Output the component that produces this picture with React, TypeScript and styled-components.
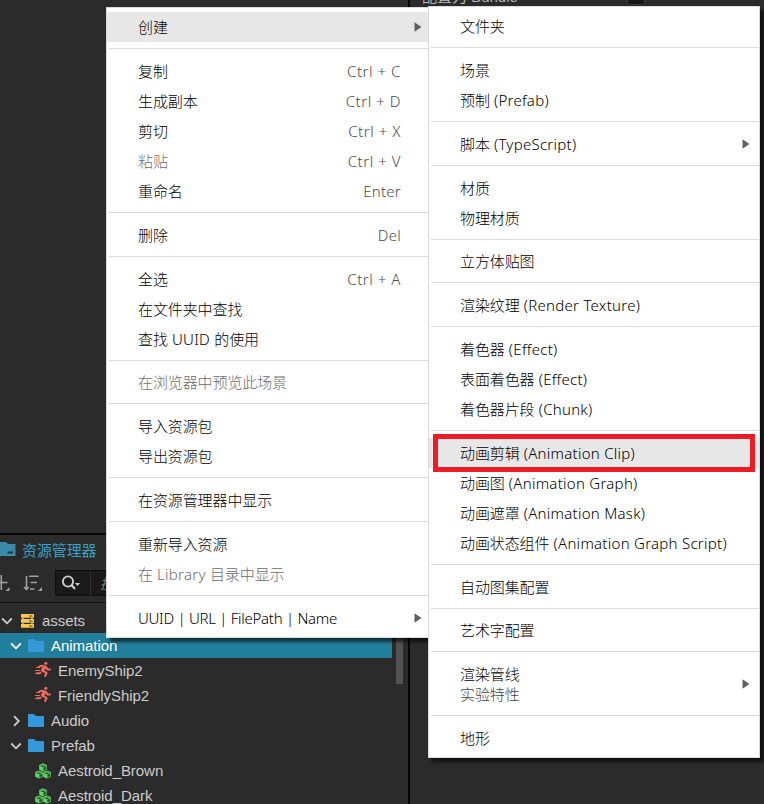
import React from 'react';
import styled, { createGlobalStyle } from 'styled-components';
import { FaRunning } from 'react-icons/fa';

const GlobalStyle = createGlobalStyle`
  * { box-sizing: border-box; }
  body { margin: 0; background: #2b2b2b; overflow: hidden; }
`;

const uiFont = `"Liberation Sans", "Noto Sans CJK SC", sans-serif`;
const menuFont = `"Noto Sans CJK SC", "Noto Sans", sans-serif`;

const Editor = styled.div`
  position: relative;
  display: flex;
  width: 764px;
  height: 804px;
  overflow: hidden;
  background: #2b2b2b;
  font-family: ${uiFont};
`;

const LeftDock = styled.div`
  display: flex;
  flex-direction: column;
  width: 408px;
`;

const DockDivider = styled.div`
  width: 2px;
  background: #060606;
`;

const Scene = styled.div`
  height: 533px;
  flex: none;
`;

const PanelHeader = styled.div`
  display: flex;
  align-items: center;
  height: 30px;
  flex: none;
  border-top: 2px solid #080808;
  color: #37a0c8;
  font-size: 15px;
  letter-spacing: -0.1px;
  svg { margin-right: 5px; }
`;

const Toolbar = styled.div`
  display: flex;
  align-items: center;
  height: 40px;
  flex: none;
  border-bottom: 1px solid #101010;
`;

const ToolIcons = styled.div`
  display: flex;
  width: 55px;
  align-items: center;
`;

const SearchBox = styled.div`
  display: flex;
  align-items: center;
  width: 340px;
  height: 26px;
  background: #1a1a1a;
  border: 1px solid #0c0c0c;
  border-radius: 2px;
`;

const SearchKind = styled.div`
  display: flex;
  align-items: center;
  width: 35px;
  height: 100%;
  padding-left: 5px;
  border-right: 1px solid #333;
`;

const SearchHint = styled.span`
  padding-left: 9px;
  color: #808080;
  font-size: 14px;
  font-style: italic;
`;

const TreeArea = styled.div`
  display: flex;
  flex: 1;
  padding-top: 5px;
`;

const Tree = styled.div`
  width: 392px;
`;

const TreeRow = styled.div<{ $depth: number; $selected?: boolean }>`
  display: flex;
  align-items: center;
  height: 25px;
  padding-left: ${p => p.$depth * 9 - (p.$depth === 2 ? 2 : 0)}px;
  background: ${p => (p.$selected ? '#227f9b' : 'transparent')};
  color: ${p => (p.$selected ? '#fff' : '#ccc')};
  font-size: 15px;
  letter-spacing: -0.05px;
  white-space: nowrap;
`;

const ArrowSlot = styled.span<{ $wide?: boolean }>`
  display: flex;
  width: ${p => (p.$wide ? 21 : 19)}px;
  flex: none;
  padding-left: 1px;
`;

const IconSlot = styled.span<{ $gap: number }>`
  display: flex;
  align-items: center;
  width: 16px;
  flex: none;
  margin-right: ${p => p.$gap}px;
`;

const ScrollThumb = styled.div`
  width: 7px;
  height: 76px;
  margin-left: 4px;
  background: #525252;
`;

const Inspector = styled.div`
  flex: 1;
  display: flex;
  align-items: flex-start;
  height: 12px;
`;

const PropertyName = styled.span`
  width: 205px;
  margin: -12px 0 0 12px;
  color: #b5b5b5;
  font-size: 15px;
  line-height: 18px;
`;

const PropertyCheck = styled.span`
  width: 18px;
  height: 16px;
  margin-top: -11px;
  background: #161616;
  border: 1px solid #3c3c3c;
  border-radius: 2px;
`;

const Menu = styled.div<{ $x: number; $y: number; $w: number; $h: number }>`
  position: absolute;
  left: ${p => p.$x}px;
  top: ${p => p.$y}px;
  width: ${p => p.$w}px;
  height: ${p => p.$h}px;
  padding: 4.2px 0;
  background: #fff;
  border: 1px solid #dadbdd;
  box-shadow: 4px 4px 3px rgba(0, 0, 0, 0.6);
  font-family: ${menuFont};
  font-size: 15px;
  font-weight: 300;
  letter-spacing: -0.1px;
  color: #000;
`;

const MenuRow = styled.div<{ $active?: boolean; $disabled?: boolean; $tall?: boolean }>`
  display: flex;
  align-items: center;
  height: ${p => (p.$tall ? 50 : 30)}px;
  padding: 0 9px 0 31px;
  background: ${p => (p.$active ? '#e7e7e7' : 'transparent')};
  color: ${p => (p.$disabled ? '#6d6d6d' : '#000')};
  white-space: pre;
`;

const MenuText = styled.span`
  flex: 1;
  line-height: 20px;
`;

const Latin = styled.span<{ $spacing: number }>`
  font-family: "Noto Sans", sans-serif;
  letter-spacing: ${p => p.$spacing}px;
`;

const SubText = styled.div`
  color: #444;
`;

const Shortcut = styled.span`
  margin-right: 19px;
  color: #4c4c4c;
`;

const ArrowBox = styled.span<{ $shift: number }>`
  display: flex;
  margin-right: ${p => -p.$shift}px;
`;

const Separator = styled.div`
  height: 13.8px;
  padding: 6px 0 0 2px;
  &::before {
    content: '';
    display: block;
    height: 1px;
    background: #d9dadd;
  }
`;

const Highlight = styled.div`
  position: absolute;
  left: 433px;
  top: 434px;
  width: 322px;
  height: 38px;
  border: 5px solid #ed1c24;
`;

type Entry =
  | '-'
  | {
      label: string;
      keys?: string;
      sub?: string;
      arrow?: boolean;
      disabled?: boolean;
      active?: boolean;
      spacing?: number;
    };

const editEntries: Entry[] = [
  { label: '创建', arrow: true, active: true },
  '-',
  { label: '复制', keys: 'Ctrl + C' },
  { label: '生成副本', keys: 'Ctrl + D' },
  { label: '剪切', keys: 'Ctrl + X' },
  { label: '粘贴', keys: 'Ctrl + V', disabled: true },
  { label: '重命名', keys: 'Enter' },
  '-',
  { label: '删除', keys: 'Del' },
  '-',
  { label: '全选', keys: 'Ctrl + A' },
  { label: '在文件夹中查找' },
  { label: '查找 UUID 的使用' },
  '-',
  { label: '在浏览器中预览此场景', disabled: true },
  '-',
  { label: '导入资源包' },
  { label: '导出资源包' },
  '-',
  { label: '在资源管理器中显示' },
  '-',
  { label: '重新导入资源' },
  { label: '在 Library 目录中显示', disabled: true },
  '-',
  { label: 'UUID | URL | FilePath | Name', arrow: true, spacing: -0.28 },
];

const createEntries: Entry[] = [
  { label: '文件夹' },
  '-',
  { label: '场景' },
  { label: '预制 (Prefab)' },
  '-',
  { label: '脚本 (TypeScript)', arrow: true },
  '-',
  { label: '材质' },
  { label: '物理材质' },
  '-',
  { label: '立方体贴图' },
  '-',
  { label: '渲染纹理 (Render Texture)' },
  '-',
  { label: '着色器 (Effect)' },
  { label: '表面着色器 (Effect)' },
  { label: '着色器片段 (Chunk)' },
  '-',
  { label: '动画剪辑 (Animation Clip)', active: true },
  { label: '动画图 (Animation Graph)' },
  { label: '动画遮罩 (Animation Mask)' },
  { label: '动画状态组件 (Animation Graph Script)' },
  '-',
  { label: '自动图集配置' },
  '-',
  { label: '艺术字配置' },
  '-',
  { label: '渲染管线', sub: '实验特性', arrow: true },
  '-',
  { label: '地形' },
];

/* Latin runs use their own face and tracking beside the Chinese text. */
const Mixed = ({ text, spacing = 0.27 }: { text: string; spacing?: number }) => (
  <>
    {text.split(/([\x20-\x7e]+)/).map((part, i) =>
      i % 2 ? <Latin key={i} $spacing={spacing}>{part}</Latin> : part,
    )}
  </>
);

const SubmenuArrow = () => (
  <svg width="8" height="10" viewBox="0 0 8 10">
    <path d="M0.5 0.3V9.7L7.5 5Z" fill="#606060" />
  </svg>
);

const MenuEntries = ({ entries, arrowShift = 0 }: { entries: Entry[]; arrowShift?: number }) => (
  <>
    {entries.map((e, i) =>
      e === '-' ? (
        <Separator key={i} />
      ) : (
        <MenuRow key={i} $active={e.active} $disabled={e.disabled} $tall={!!e.sub}>
          <MenuText>
            <Mixed text={e.label} spacing={e.spacing} />
            {e.sub && <SubText>{e.sub}</SubText>}
          </MenuText>
          {e.keys && (
            <Shortcut><Mixed text={e.keys} spacing={e.keys.includes('+') ? 0.55 : 0.25} /></Shortcut>
          )}
          {e.arrow && <ArrowBox $shift={arrowShift}><SubmenuArrow /></ArrowBox>}
        </MenuRow>
      ),
    )}
  </>
);

const Chevron = ({ open, bright }: { open: boolean; bright?: boolean }) => (
  <svg width="12" height="12" viewBox="0 0 12 12" fill="none" stroke={bright ? '#fff' : '#ccc'} strokeWidth="1.8">
    <path d={open ? 'M1.2 3.5L6 8.3L10.8 3.5' : 'M4 1.2L8.8 6L4 10.8'} />
  </svg>
);

const FolderIcon = () => (
  <svg width="16" height="13" viewBox="0 0 16 13">
    <path d="M0 1Q0 0 1 0H6L8 2H15Q16 2 16 3V12Q16 13 15 13H1Q0 13 0 12Z" fill="#3498db" />
  </svg>
);

const DatabaseIcon = () => (
  <svg width="13" height="14" viewBox="0 0 13 14">
    <path d="M0 0H13V3.8H0Z M0 5H13V8.8H0Z M0 10H13V13.8H0Z" fill="#fac850" />
    <path d="M8 2H11.5M8 7H11.5M8 12H11.5" stroke="#5c4a20" strokeWidth="1" />
    <path d="M2 3.8V5M11 3.8V5M2 8.8V10M11 8.8V10" stroke="#fac850" strokeWidth="1.4" />
  </svg>
);

const ClipIcon = () => (
  <svg width="16" height="18" viewBox="0 0 16 18">
    <FaRunning x="1" y="0" width="15" height="18" preserveAspectRatio="none" color="#ec6a5e" />
    <path d="M1 5.5H5M0 8.5H5M0 11.5H4" stroke="#ec6a5e" strokeWidth="1" />
  </svg>
);

const Cube = ({ x, y }: { x: number; y: number }) => (
  <g transform={`translate(${x} ${y})`}>
    <path d="M4 0L7.8 1.7V6.3L4 8.2L0.2 6.3V1.7Z" fill="#62d468" />
    <path d="M1.3 2.4L4 3.6L6.7 2.4M4.7 4.5V6.9L6.8 5.8V3.5Z" fill="#26492a" stroke="#26492a" strokeWidth="0.5" />
    <path d="M2.6 1.7L4 1.1L5.4 1.7L4 2.3Z" fill="#326b36" />
  </g>
);

const PrefabIcon = () => (
  <svg width="16" height="16" viewBox="0 0 16 16">
    <Cube x={0} y={7.4} />
    <Cube x={8} y={7.4} />
    <Cube x={4} y={0.3} />
  </svg>
);

const AssetPanelIcon = () => (
  <svg width="17" height="14" viewBox="0 0 17 14">
    <path d="M0 0H6L8 2H15.5V14H0Z" fill="#378aa8" />
    <path d="M7.5 10.5H13" stroke="#20343c" strokeWidth="2" />
  </svg>
);

const ToolbarGlyphs = () => (
  <svg width="44" height="18" viewBox="0 0 44 18" fill="none" stroke="#a0a0a0" strokeWidth="1.6">
    <path d="M0 8.5H7.5M1.3 1V16" />
    <path d="M9.5 17V13L5.5 17Z M42 17V13L38 17Z" fill="#a0a0a0" stroke="none" />
    <path d="M26.5 2V15.5M24 13L26.5 15.5L28.5 13M29 2.2H38.5M30.5 8.5H37M30 15H34.5" />
  </svg>
);

const SearchIcon = () => (
  <svg width="20" height="17" viewBox="0 0 20 17">
    <circle cx="7" cy="7.5" r="5.1" fill="none" stroke="#ccc" strokeWidth="1.9" />
    <path d="M10.5 11L14 15" stroke="#ccc" strokeWidth="2" />
    <path d="M14 9H19L16.5 12Z" fill="#ccc" />
  </svg>
);

const assets = [
  { name: 'assets', depth: 0, kind: 'db', open: true },
  { name: 'Animation', depth: 1, kind: 'folder', open: true, selected: true },
  { name: 'EnemyShip2', depth: 2, kind: 'clip' },
  { name: 'FriendlyShip2', depth: 2, kind: 'clip' },
  { name: 'Audio', depth: 1, kind: 'folder', open: false },
  { name: 'Prefab', depth: 1, kind: 'folder', open: true },
  { name: 'Aestroid_Brown', depth: 2, kind: 'prefab' },
  { name: 'Aestroid_Dark', depth: 2, kind: 'prefab' },
];

const kindIcons: Record<string, React.ReactNode> = {
  db: <DatabaseIcon />,
  folder: <FolderIcon />,
  clip: <ClipIcon />,
  prefab: <PrefabIcon />,
};

export default function App() {
  return (
    <Editor>
      <GlobalStyle />
      <LeftDock>
        <Scene />
        <PanelHeader><AssetPanelIcon />资源管理器</PanelHeader>
        <Toolbar>
          <ToolIcons><ToolbarGlyphs /></ToolIcons>
          <SearchBox>
            <SearchKind><SearchIcon /></SearchKind>
            <SearchHint>搜索</SearchHint>
          </SearchBox>
        </Toolbar>
        <TreeArea>
          <Tree>
            {assets.map(a => (
              <TreeRow key={a.name} $depth={a.depth} $selected={a.selected}>
                <ArrowSlot $wide={a.depth === 0}>
                  {a.open !== undefined && <Chevron open={a.open} bright={a.selected} />}
                </ArrowSlot>
                <IconSlot $gap={a.depth === 0 ? 5 : 7}>{kindIcons[a.kind]}</IconSlot>
                {a.name}
              </TreeRow>
            ))}
          </Tree>
          <ScrollThumb />
        </TreeArea>
      </LeftDock>
      <DockDivider />
      <Inspector>
        <PropertyName>配置为 Bundle</PropertyName>
        <PropertyCheck />
      </Inspector>
      <Menu $x={106} $y={7} $w={324} $h={631}>
        <MenuEntries entries={editEntries} arrowShift={2} />
      </Menu>
      <Menu $x={428} $y={6} $w={332} $h={752}>
        <MenuEntries entries={createEntries} />
      </Menu>
      <Highlight />
    </Editor>
  );
}
